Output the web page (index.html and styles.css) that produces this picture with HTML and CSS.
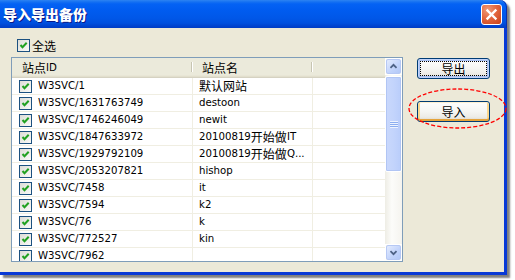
FILE: index.html
```html
<!DOCTYPE html>
<html>
<head>
<meta charset="utf-8">
<link rel="stylesheet" href="styles.css">
</head>
<body>
<div class="window">
  <div class="titlebar">
    <span class="title">导入导出备份</span>
    <div class="close"><svg width="19" height="19" viewBox="0 0 19 19"><path d="M5.5 5.5 L13.5 13.5 M13.5 5.5 L5.5 13.5" stroke="#fff" stroke-width="2.4" stroke-linecap="square"/></svg></div>
  </div>
  <div class="frame">
    <div class="client">
      <div class="leftcol">
        <div class="selall"><span class="cb"><svg width="11" height="11" viewBox="0 0 11 11"><path d="M2.5 5 L4.5 7.2 L8.7 2.8" fill="none" stroke="#21a121" stroke-width="2"/></svg></span><span class="cjk">全选</span></div>
        <div class="list">
          <div class="table">
            <div class="hdr">
              <div class="hc c1"><span class="cjk">站点</span>ID</div>
              <div class="hc c2"><span class="cjk">站点名</span></div>
              <div class="hc c3"></div>
            </div>
            <div class="row"><div class="cell c1"><span class="cb"><svg width="11" height="11" viewBox="0 0 11 11"><path d="M2.5 5 L4.5 7.2 L8.7 2.8" fill="none" stroke="#21a121" stroke-width="2"/></svg></span>W3SVC/1</div><div class="cell c2"><span class="cjk">默认网站</span></div><div class="cell c3"></div></div>
            <div class="row"><div class="cell c1"><span class="cb"><svg width="11" height="11" viewBox="0 0 11 11"><path d="M2.5 5 L4.5 7.2 L8.7 2.8" fill="none" stroke="#21a121" stroke-width="2"/></svg></span>W3SVC/1631763749</div><div class="cell c2">destoon</div><div class="cell c3"></div></div>
            <div class="row"><div class="cell c1"><span class="cb"><svg width="11" height="11" viewBox="0 0 11 11"><path d="M2.5 5 L4.5 7.2 L8.7 2.8" fill="none" stroke="#21a121" stroke-width="2"/></svg></span>W3SVC/1746246049</div><div class="cell c2">newit</div><div class="cell c3"></div></div>
            <div class="row"><div class="cell c1"><span class="cb"><svg width="11" height="11" viewBox="0 0 11 11"><path d="M2.5 5 L4.5 7.2 L8.7 2.8" fill="none" stroke="#21a121" stroke-width="2"/></svg></span>W3SVC/1847633972</div><div class="cell c2">20100819<span class="cjk">开始做</span>IT</div><div class="cell c3"></div></div>
            <div class="row"><div class="cell c1"><span class="cb"><svg width="11" height="11" viewBox="0 0 11 11"><path d="M2.5 5 L4.5 7.2 L8.7 2.8" fill="none" stroke="#21a121" stroke-width="2"/></svg></span>W3SVC/1929792109</div><div class="cell c2">20100819<span class="cjk">开始做</span>Q...</div><div class="cell c3"></div></div>
            <div class="row"><div class="cell c1"><span class="cb"><svg width="11" height="11" viewBox="0 0 11 11"><path d="M2.5 5 L4.5 7.2 L8.7 2.8" fill="none" stroke="#21a121" stroke-width="2"/></svg></span>W3SVC/2053207821</div><div class="cell c2">hishop</div><div class="cell c3"></div></div>
            <div class="row"><div class="cell c1"><span class="cb"><svg width="11" height="11" viewBox="0 0 11 11"><path d="M2.5 5 L4.5 7.2 L8.7 2.8" fill="none" stroke="#21a121" stroke-width="2"/></svg></span>W3SVC/7458</div><div class="cell c2">it</div><div class="cell c3"></div></div>
            <div class="row"><div class="cell c1"><span class="cb"><svg width="11" height="11" viewBox="0 0 11 11"><path d="M2.5 5 L4.5 7.2 L8.7 2.8" fill="none" stroke="#21a121" stroke-width="2"/></svg></span>W3SVC/7594</div><div class="cell c2">k2</div><div class="cell c3"></div></div>
            <div class="row"><div class="cell c1"><span class="cb"><svg width="11" height="11" viewBox="0 0 11 11"><path d="M2.5 5 L4.5 7.2 L8.7 2.8" fill="none" stroke="#21a121" stroke-width="2"/></svg></span>W3SVC/76</div><div class="cell c2">k</div><div class="cell c3"></div></div>
            <div class="row"><div class="cell c1"><span class="cb"><svg width="11" height="11" viewBox="0 0 11 11"><path d="M2.5 5 L4.5 7.2 L8.7 2.8" fill="none" stroke="#21a121" stroke-width="2"/></svg></span>W3SVC/772527</div><div class="cell c2">kin</div><div class="cell c3"></div></div>
            <div class="row"><div class="cell c1"><span class="cb"><svg width="11" height="11" viewBox="0 0 11 11"><path d="M2.5 5 L4.5 7.2 L8.7 2.8" fill="none" stroke="#21a121" stroke-width="2"/></svg></span>W3SVC/7962</div><div class="cell c2"></div><div class="cell c3"></div></div>
          </div>
          <div class="scroll">
            <div class="sbtn"><svg width="15" height="15" viewBox="0 0 15 15"><path d="M4 9 L7.5 5.5 L11 9" fill="none" stroke="#4d6185" stroke-width="2"/></svg></div>
            <div class="thumb"><span class="grip"></span></div>
            <div class="track"></div>
            <div class="sbtn"><svg width="15" height="15" viewBox="0 0 15 15"><path d="M4 6 L7.5 9.5 L11 6" fill="none" stroke="#4d6185" stroke-width="2"/></svg></div>
          </div>
        </div>
      </div>
      <div class="rightcol">
        <div class="btn default"><span class="focus cjk">导出</span></div>
        <div class="btn hover"><span class="cjk">导入</span></div>
      </div>
    </div>
  </div>
  <svg class="mark" width="100" height="42" viewBox="0 0 100 42"><ellipse cx="49.5" cy="20.5" rx="48.5" ry="19.5" fill="none" stroke="#ff0000" stroke-width="1.3" stroke-dasharray="4 2"/></svg>
</div>
</body>
</html>
```
FILE: styles.css
```css
html, body {
  margin: 0;
  padding: 0;
}
body {
  width: 515px;
  height: 280px;
  overflow: hidden;
  background: #fff;
  font-family: "DejaVu Sans", "Noto Sans CJK SC", sans-serif;
  font-size: 10.2px;
  color: #000;
}
.cjk {
  font-family: "Noto Sans CJK SC", sans-serif;
  font-size: 12px;
}
.window {
  position: relative;
  width: 507px;
  display: flex;
  flex-direction: column;
  box-shadow: 3px 3px 2px rgba(0, 0, 0, 0.5);
  border-top-right-radius: 7px;
}
.titlebar {
  height: 28px;
  display: flex;
  align-items: center;
  justify-content: space-between;
  background: linear-gradient(#2d83f2 0, #1470f2 2px, #0462f4 4px, #005cf0 10px, #0057e8 18px, #0050df 23px, #0047d4 25px, #003cc4 28px);
  border-top-right-radius: 7px;
  box-shadow: inset -1px 0 #0a2fb0;
}
.title {
  margin-left: 3px;
  color: #fff;
  font-family: "Noto Sans CJK SC", sans-serif;
  font-size: 14px;
  font-weight: 900;
  text-shadow: 1px 1px #0a1a8a;
}
.close {
  width: 19px;
  height: 19px;
  margin-right: 5px;
  margin-top: 1px;
  border: 1px solid #fff;
  border-radius: 3px;
  background: radial-gradient(circle at 30% 25%, #ef9a78 0, #e3683f 45%, #c93f18 100%);
  display: flex;
}
.frame {
  border-right: 3px solid #0839d6;
  border-bottom: 3px solid #0839d6;
  box-shadow: inset -1px -1px #0a2ab0;
}
.client {
  height: 244px;
  box-sizing: border-box;
  background: #ece9d8;
  display: flex;
  padding: 11px 0 0 11px;
}
.leftcol {
  width: 392px;
  display: flex;
  flex-direction: column;
}
.selall {
  height: 13px;
  margin-left: 6px;
  display: flex;
  align-items: center;
  gap: 2px;
}
.cb {
  width: 13px;
  height: 13px;
  box-sizing: border-box;
  border: 1px solid #1c5180;
  background: linear-gradient(135deg, #dcdcd6, #fafaf8);
  display: flex;
  flex: none;
}
.list {
  margin-top: 5px;
  height: 205px;
  box-sizing: border-box;
  border: 1px solid #7f9db9;
  background: #fff;
  display: flex;
}
.table {
  width: 373px;
  overflow: hidden;
}
.hdr {
  height: 20px;
  box-sizing: border-box;
  display: flex;
  background: #ebeadb;
  border-bottom: 1px solid #d5d2c2;
  box-shadow: inset 0 -1px #e2dfcd, inset 0 -2px #e8e6d6;
}
.hc {
  position: relative;
  box-sizing: border-box;
  display: flex;
  align-items: center;
  padding-left: 10px;
}
.hc.c1::after, .hc.c2::after {
  content: "";
  position: absolute;
  right: 0;
  top: 4px;
  bottom: 5px;
  width: 1px;
  background: #c7c5b2;
  box-shadow: 1px 0 #fff;
}
.c1 {
  width: 180px;
  flex: none;
}
.c2 {
  width: 120px;
  flex: none;
}
.c3 {
  flex: 1;
}
.row {
  height: 17px;
  box-sizing: border-box;
  display: flex;
  border-bottom: 1px solid #f0eee2;
}
.cell {
  box-sizing: border-box;
  display: flex;
  align-items: center;
  white-space: nowrap;
  overflow: hidden;
  line-height: 16px;
}
.cell.c1 {
  width: 181px;
  padding-left: 7px;
  gap: 6px;
  border-right: 1px solid #f0eee2;
}
.cell.c2 {
  padding-left: 6px;
  border-right: 1px solid #f0eee2;
}
.scroll {
  width: 17px;
  display: flex;
  flex-direction: column;
  background: linear-gradient(90deg, #eeede5, #fcfcfa 40%, #f5f4ef);
}
.sbtn {
  width: 17px;
  height: 17px;
  box-sizing: border-box;
  border: 1px solid #fff;
  flex: none;
  display: flex;
  align-items: center;
  justify-content: center;
}
.sbtn svg {
  box-sizing: border-box;
  border: 1px solid #b6c8f4;
  border-radius: 2px;
  background: linear-gradient(135deg, #e3ebfe, #c1d3fb 60%, #b3c8f7);
}
.thumb {
  margin: 1px 0 0;
  height: 96px;
  box-sizing: border-box;
  border: 1px solid #fff;
  flex: none;
  display: flex;
  align-items: center;
  justify-content: center;
  background: linear-gradient(90deg, #c9d8fc, #c3d4fc 50%, #b9cdfb);
  border-radius: 2px;
  box-shadow: inset 0 0 0 1px #b1c5f4;
}
.grip {
  width: 8px;
  height: 7px;
  background: repeating-linear-gradient(#eef4fe 0, #eef4fe 1px, #8caef0 1px, #8caef0 2px);
}
.track {
  flex: 1;
}
.rightcol {
  margin-left: 14px;
  padding-top: 19px;
  display: flex;
  flex-direction: column;
  gap: 22px;
}
.btn {
  width: 73px;
  height: 21px;
  box-sizing: border-box;
  border: 1px solid #003c74;
  border-radius: 3px;
  background: linear-gradient(#fefefe, #f5f5f2 50%, #ecebe6 80%, #d8d3c8);
  display: flex;
  align-items: center;
  justify-content: center;
}
.btn.default {
  box-shadow: inset 0 0 0 1px #c2d3fa, inset 0 0 0 2px #a9c1f2;
}
.focus {
  width: 65px;
  height: 13px;
  line-height: 13px;
  text-align: center;
  outline: 1px dotted #000;
}
.btn.hover {
  box-shadow: inset 0 -2px #e5a33a, inset 0 1px #fff0cf, inset 2px 0 #fbd890, inset -2px 0 #fbd890;
}
.mark {
  position: absolute;
  left: 408px;
  top: 88px;
}
```
